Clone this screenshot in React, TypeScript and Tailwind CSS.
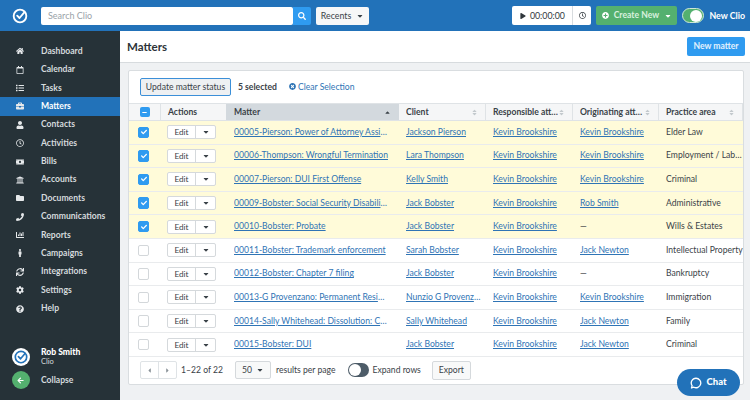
import React from "react";
import {
  FaHome,
  FaRegCalendar,
  FaList,
  FaBriefcase,
  FaUser,
  FaRegClock,
  FaMoneyBill,
  FaUniversity,
  FaFolder,
  FaPhone,
  FaChartBar,
  FaMale,
  FaSync,
  FaCog,
  FaQuestionCircle,
  FaSearch,
  FaPlay,
  FaPlusCircle,
  FaTimesCircle,
  FaCaretDown,
  FaCaretUp,
  FaCaretLeft,
  FaCaretRight,
  FaCheck,
  FaMinus,
  FaArrowLeft,
  FaSort,
} from "react-icons/fa";

const nav = [
  { label: "Dashboard", icon: FaHome },
  { label: "Calendar", icon: FaRegCalendar },
  { label: "Tasks", icon: FaList },
  { label: "Matters", icon: FaBriefcase, active: true },
  { label: "Contacts", icon: FaUser },
  { label: "Activities", icon: FaRegClock },
  { label: "Bills", icon: FaMoneyBill },
  { label: "Accounts", icon: FaUniversity },
  { label: "Documents", icon: FaFolder },
  { label: "Communications", icon: FaPhone },
  { label: "Reports", icon: FaChartBar },
  { label: "Campaigns", icon: FaMale },
  { label: "Integrations", icon: FaSync },
  { label: "Settings", icon: FaCog },
  { label: "Help", icon: FaQuestionCircle },
];

const rows = [
  { matter: "00005-Pierson: Power of Attorney Assignment", client: "Jackson Pierson", resp: "Kevin Brookshire", orig: "Kevin Brookshire", area: "Elder Law", on: true },
  { matter: "00006-Thompson: Wrongful Termination", client: "Lara Thompson", resp: "Kevin Brookshire", orig: "Kevin Brookshire", area: "Employment / Labor", on: true },
  { matter: "00007-Pierson: DUI First Offense", client: "Kelly Smith", resp: "Kevin Brookshire", orig: "Kevin Brookshire", area: "Criminal", on: true },
  { matter: "00009-Bobster: Social Security Disability Appeal", client: "Jack Bobster", resp: "Kevin Brookshire", orig: "Rob Smith", area: "Administrative", on: true },
  { matter: "00010-Bobster: Probate", client: "Jack Bobster", resp: "Kevin Brookshire", orig: "—", area: "Wills & Estates", on: true },
  { matter: "00011-Bobster: Trademark enforcement", client: "Sarah Bobster", resp: "Kevin Brookshire", orig: "Jack Newton", area: "Intellectual Property", on: false },
  { matter: "00012-Bobster: Chapter 7 filing", client: "Jack Bobster", resp: "Kevin Brookshire", orig: "—", area: "Bankruptcy", on: false },
  { matter: "00013-G Provenzano: Permanent Residency Application", client: "Nunzio G Provenzano", resp: "Kevin Brookshire", orig: "Kevin Brookshire", area: "Immigration", on: false },
  { matter: "00014-Sally Whitehead: Dissolution: Children and Support", client: "Sally Whitehead", resp: "Kevin Brookshire", orig: "Jack Newton", area: "Family", on: false },
  { matter: "00015-Bobster: DUI", client: "Jack Bobster", resp: "Kevin Brookshire", orig: "Jack Newton", area: "Criminal", on: false },
];

const gridCols = "grid grid-cols-[32px_65px_173px_87px_87px_86px_1fr]";

const ClioMark = ({ size, color, bg }: { size: number; color: string; bg: string }) => (
  <svg width={size} height={size} viewBox="0 0 24 24" fill="none">
    <circle cx="12" cy="12" r="12" fill={bg} />
    <circle cx="12" cy="12" r="7.6" stroke={color} strokeWidth="2.2" />
    <path d="M8.6 11.6l2.8 2.8 6-7" stroke={color} strokeWidth="2.2" strokeLinecap="round" strokeLinejoin="round" />
  </svg>
);

const Checkbox = ({ on }: { on: boolean }) =>
  on ? (
    <span className="w-[9.5px] h-[9.5px] box-content border border-[#2f9bf0] rounded-[2px] bg-[#2f9bf0] flex items-center justify-center text-white">
      <FaCheck size={6} />
    </span>
  ) : (
    <span className="w-[9.5px] h-[9.5px] box-content border border-[#d3d7da] rounded-[2px] bg-white" />
  );

const Link = ({ text }: { text: string }) => (
  <span className="block truncate text-[#2f74b5] underline">{text}</span>
);

const HeaderCell = ({ label }: { label: string }) => (
  <div className="flex items-center justify-between pl-[7px] pr-[7px] border-r border-[#dfe3e6] font-bold text-[#3a4248] whitespace-nowrap overflow-hidden">
    <span className="truncate">{label}</span>
    <FaSort size={7} className="text-[#c3c9cd] shrink-0" />
  </div>
);

export default function App() {
  return (
    <div className="w-[750px] h-[400px] overflow-hidden flex flex-col bg-[#eff1f3] text-[8.6px] text-[#3a4248] font-['Lato','Liberation_Sans',sans-serif]">
      {/* top bar */}
      <header className="h-[31px] shrink-0 bg-[#2272b9] flex items-center pl-[10px] pr-[5px]">
        <ClioMark size={20} color="#ffffff" bg="transparent" />
        <div className="ml-[11px] w-[252px] h-[18px] bg-white rounded-[2px] flex items-center pl-[7px] text-[#9aa3a9] text-[9px]">
          Search Clio
        </div>
        <div className="w-[18px] h-[18px] bg-[#2f9bf0] rounded-r-[2px] flex items-center justify-center text-white">
          <FaSearch size={8} />
        </div>
        <div className="ml-[5px] w-[53px] h-[18px] bg-[#f6f7f8] rounded-[2px] flex items-center justify-center gap-[5px] text-[8.8px] text-[#3a4248]">
          Recents <FaCaretDown size={8} />
        </div>
        <div className="ml-auto w-[79px] h-[19px] bg-white rounded-[2px] flex items-center text-[#30373c]">
          <div className="flex-1 flex items-center justify-center gap-[4px] border-r border-[#d8dcdf] h-full text-[8.8px]">
            <FaPlay size={6} /> 00:00:00
          </div>
          <div className="w-[18px] flex justify-center">
            <FaRegClock size={7} />
          </div>
        </div>
        <div className="ml-[5px] w-[81px] h-[19px] bg-[#54b06f] rounded-[2px] flex items-center justify-center gap-[5px] text-[#d9f0df] font-bold text-[8.6px]">
          <FaPlusCircle size={7} className="text-white" /> Create New <FaCaretDown size={8} className="text-white" />
        </div>
        <div className="ml-[5px] w-[22px] h-[15px] rounded-full bg-[#54b06f] border border-[#cfe8d6] flex items-center justify-end pr-[1px]">
          <span className="w-[12px] h-[12px] rounded-full bg-white" />
        </div>
        <span className="ml-[5px] text-white font-bold text-[8.8px]">New Clio</span>
      </header>

      <div className="flex-1 flex min-h-0">
        {/* sidebar */}
        <aside className="w-[120px] shrink-0 bg-[#263238] flex flex-col pt-[11px] pb-[11px] text-[#d5dadd] font-bold">
          {nav.map(({ label, icon: Icon, active }) => (
            <div
              key={label}
              className={`h-[18.4px] flex items-center ${active ? "bg-[#2272b9] text-white" : ""}`}
            >
              <span className="w-[41px] pr-[1px] flex justify-center text-[#e6e9eb]">
                <Icon size={8} />
              </span>
              <span>{label}</span>
            </div>
          ))}
          <div className="mt-auto flex items-center h-[20px] mb-[4px]">
            <span className="w-[41px] flex justify-center">
              <span className="w-[18px] h-[18px] flex">
                <ClioMark size={18} color="#2272b9" bg="#ffffff" />
              </span>
            </span>
            <div className="flex flex-col leading-[10px]">
              <span className="text-white font-black">Rob Smith</span>
              <span className="text-[7.5px] font-normal">Clio</span>
            </div>
          </div>
          <div className="flex items-center h-[18px]">
            <span className="w-[41px] flex justify-center">
              <span className="w-[18px] h-[18px] rounded-full bg-[#54b06f] flex items-center justify-center text-white">
                <FaArrowLeft size={7} />
              </span>
            </span>
            <span>Collapse</span>
          </div>
        </aside>

        <main className="flex-1 min-w-0 flex flex-col">
          {/* title bar */}
          <div className="h-[32px] shrink-0 bg-white border-b border-[#d7dbde] flex items-center justify-between pl-[7px] pr-[5px]">
            <h1 className="text-[11.5px] font-bold text-[#2c3338]">Matters</h1>
            <button className="w-[58px] h-[19px] rounded-[2px] bg-[#2f9bf0] text-[#e3f1fd] font-bold text-[8.6px]">
              New matter
            </button>
          </div>

          {/* matters card */}
          <div className="mt-[7px] ml-[8px] mr-[6px] h-[315px] bg-white border border-[#d9dde0] rounded-[2px] flex flex-col">
            <div className="h-[32px] shrink-0 flex items-center pl-[11px]">
              <button className="w-[91px] h-[18px] rounded-[2px] bg-[#eef0f2] border border-[#3b8fd8] text-[8.6px] text-[#3a4248]">
                Update matter status
              </button>
              <span className="ml-[7px] font-bold">5 selected</span>
              <span className="ml-[12px] flex items-center gap-[2px] text-[#2f74b5]">
                <FaTimesCircle size={7} /> Clear Selection
              </span>
            </div>

            <div className={`${gridCols} h-[18px] shrink-0 bg-[#f5f6f7] border-y border-[#dfe3e6]`}>
              <div className="flex items-center justify-center border-r border-[#dfe3e6]">
                <span className="w-[10px] h-[10px] rounded-[2px] bg-[#2f9bf0] flex items-center justify-center text-white">
                  <FaMinus size={5} />
                </span>
              </div>
              <div className="flex items-center pl-[7px] font-bold">Actions</div>
              <div className="flex items-center justify-between pl-[8px] pr-[8px] bg-[#d3d9de] font-bold">
                Matter <FaCaretUp size={7} />
              </div>
              <HeaderCell label="Client" />
              <HeaderCell label="Responsible attorney" />
              <HeaderCell label="Originating attorney" />
              <HeaderCell label="Practice area" />
            </div>

            {rows.map((r) => (
              <div
                key={r.matter}
                className={`${gridCols} h-[23.6px] shrink-0 items-center border-b border-[#e9ebed] ${r.on ? "bg-[#fffbd9]" : "bg-white"}`}
              >
                <div className="flex justify-center pr-[3px]">
                  <Checkbox on={r.on} />
                </div>
                <div className="pl-[6px]">
                  <div className="w-[49px] h-[14px] flex bg-white border border-[#d5d9dc] rounded-[2px] text-[8.2px]">
                    <span className="w-[28px] flex items-center justify-center border-r border-[#d5d9dc]">Edit</span>
                    <span className="flex-1 flex items-center justify-center">
                      <FaCaretDown size={8} />
                    </span>
                  </div>
                </div>
                <div className="pl-[8px] pr-[10px] min-w-0"><Link text={r.matter} /></div>
                <div className="pl-[7px] pr-[2px] min-w-0"><Link text={r.client} /></div>
                <div className="pl-[7px] pr-[2px] min-w-0"><Link text={r.resp} /></div>
                <div className="pl-[7px] pr-[2px] min-w-0">
                  {r.orig === "—" ? <span>—</span> : <Link text={r.orig} />}
                </div>
                <div className="pl-[7px] truncate">{r.area}</div>
              </div>
            ))}

            {/* pagination */}
            <div className="flex-1 flex items-center pl-[11px] min-h-0">
              <div className="w-[37px] h-[18px] flex border border-[#dfe3e6] rounded-[2px] text-[#8a9298]">
                <span className="flex-1 flex items-center justify-center border-r border-[#dfe3e6]"><FaCaretLeft size={7} /></span>
                <span className="flex-1 flex items-center justify-center"><FaCaretRight size={7} /></span>
              </div>
              <span className="ml-[4px]">1–22 of 22</span>
              <div className="ml-[12px] w-[36px] h-[18px] border border-[#d5d9dc] rounded-[2px] bg-[#f8f9f9] flex items-center justify-center gap-[4px]">
                50 <FaCaretDown size={8} />
              </div>
              <span className="ml-[5px]">results per page</span>
              <div className="ml-[12px] w-[21px] h-[14px] rounded-full bg-[#4d5c68] flex items-center pl-[1px]">
                <span className="w-[12px] h-[12px] rounded-full bg-white" />
              </div>
              <span className="ml-[4px]">Expand rows</span>
              <button className="ml-[11px] w-[39px] h-[19px] border border-[#d5d9dc] rounded-[2px] bg-[#f8f9f9] text-[8.6px]">
                Export
              </button>
            </div>
          </div>
        </main>
      </div>

      {/* chat launcher */}
      <button className="absolute left-[677px] top-[369px] w-[63px] h-[27px] rounded-full bg-[#2272b9] text-white font-black text-[9.5px] flex items-center justify-center gap-[4px]">
        <svg width="12" height="12" viewBox="0 0 24 24" fill="none" stroke="#fff" strokeWidth="2.6">
          <path d="M12 2.5a9.5 9.5 0 1 1-4.4 17.9L3 22l1.2-4.6A9.5 9.5 0 0 1 12 2.5z" strokeLinejoin="round" />
        </svg>
        Chat
      </button>
    </div>
  );
}
